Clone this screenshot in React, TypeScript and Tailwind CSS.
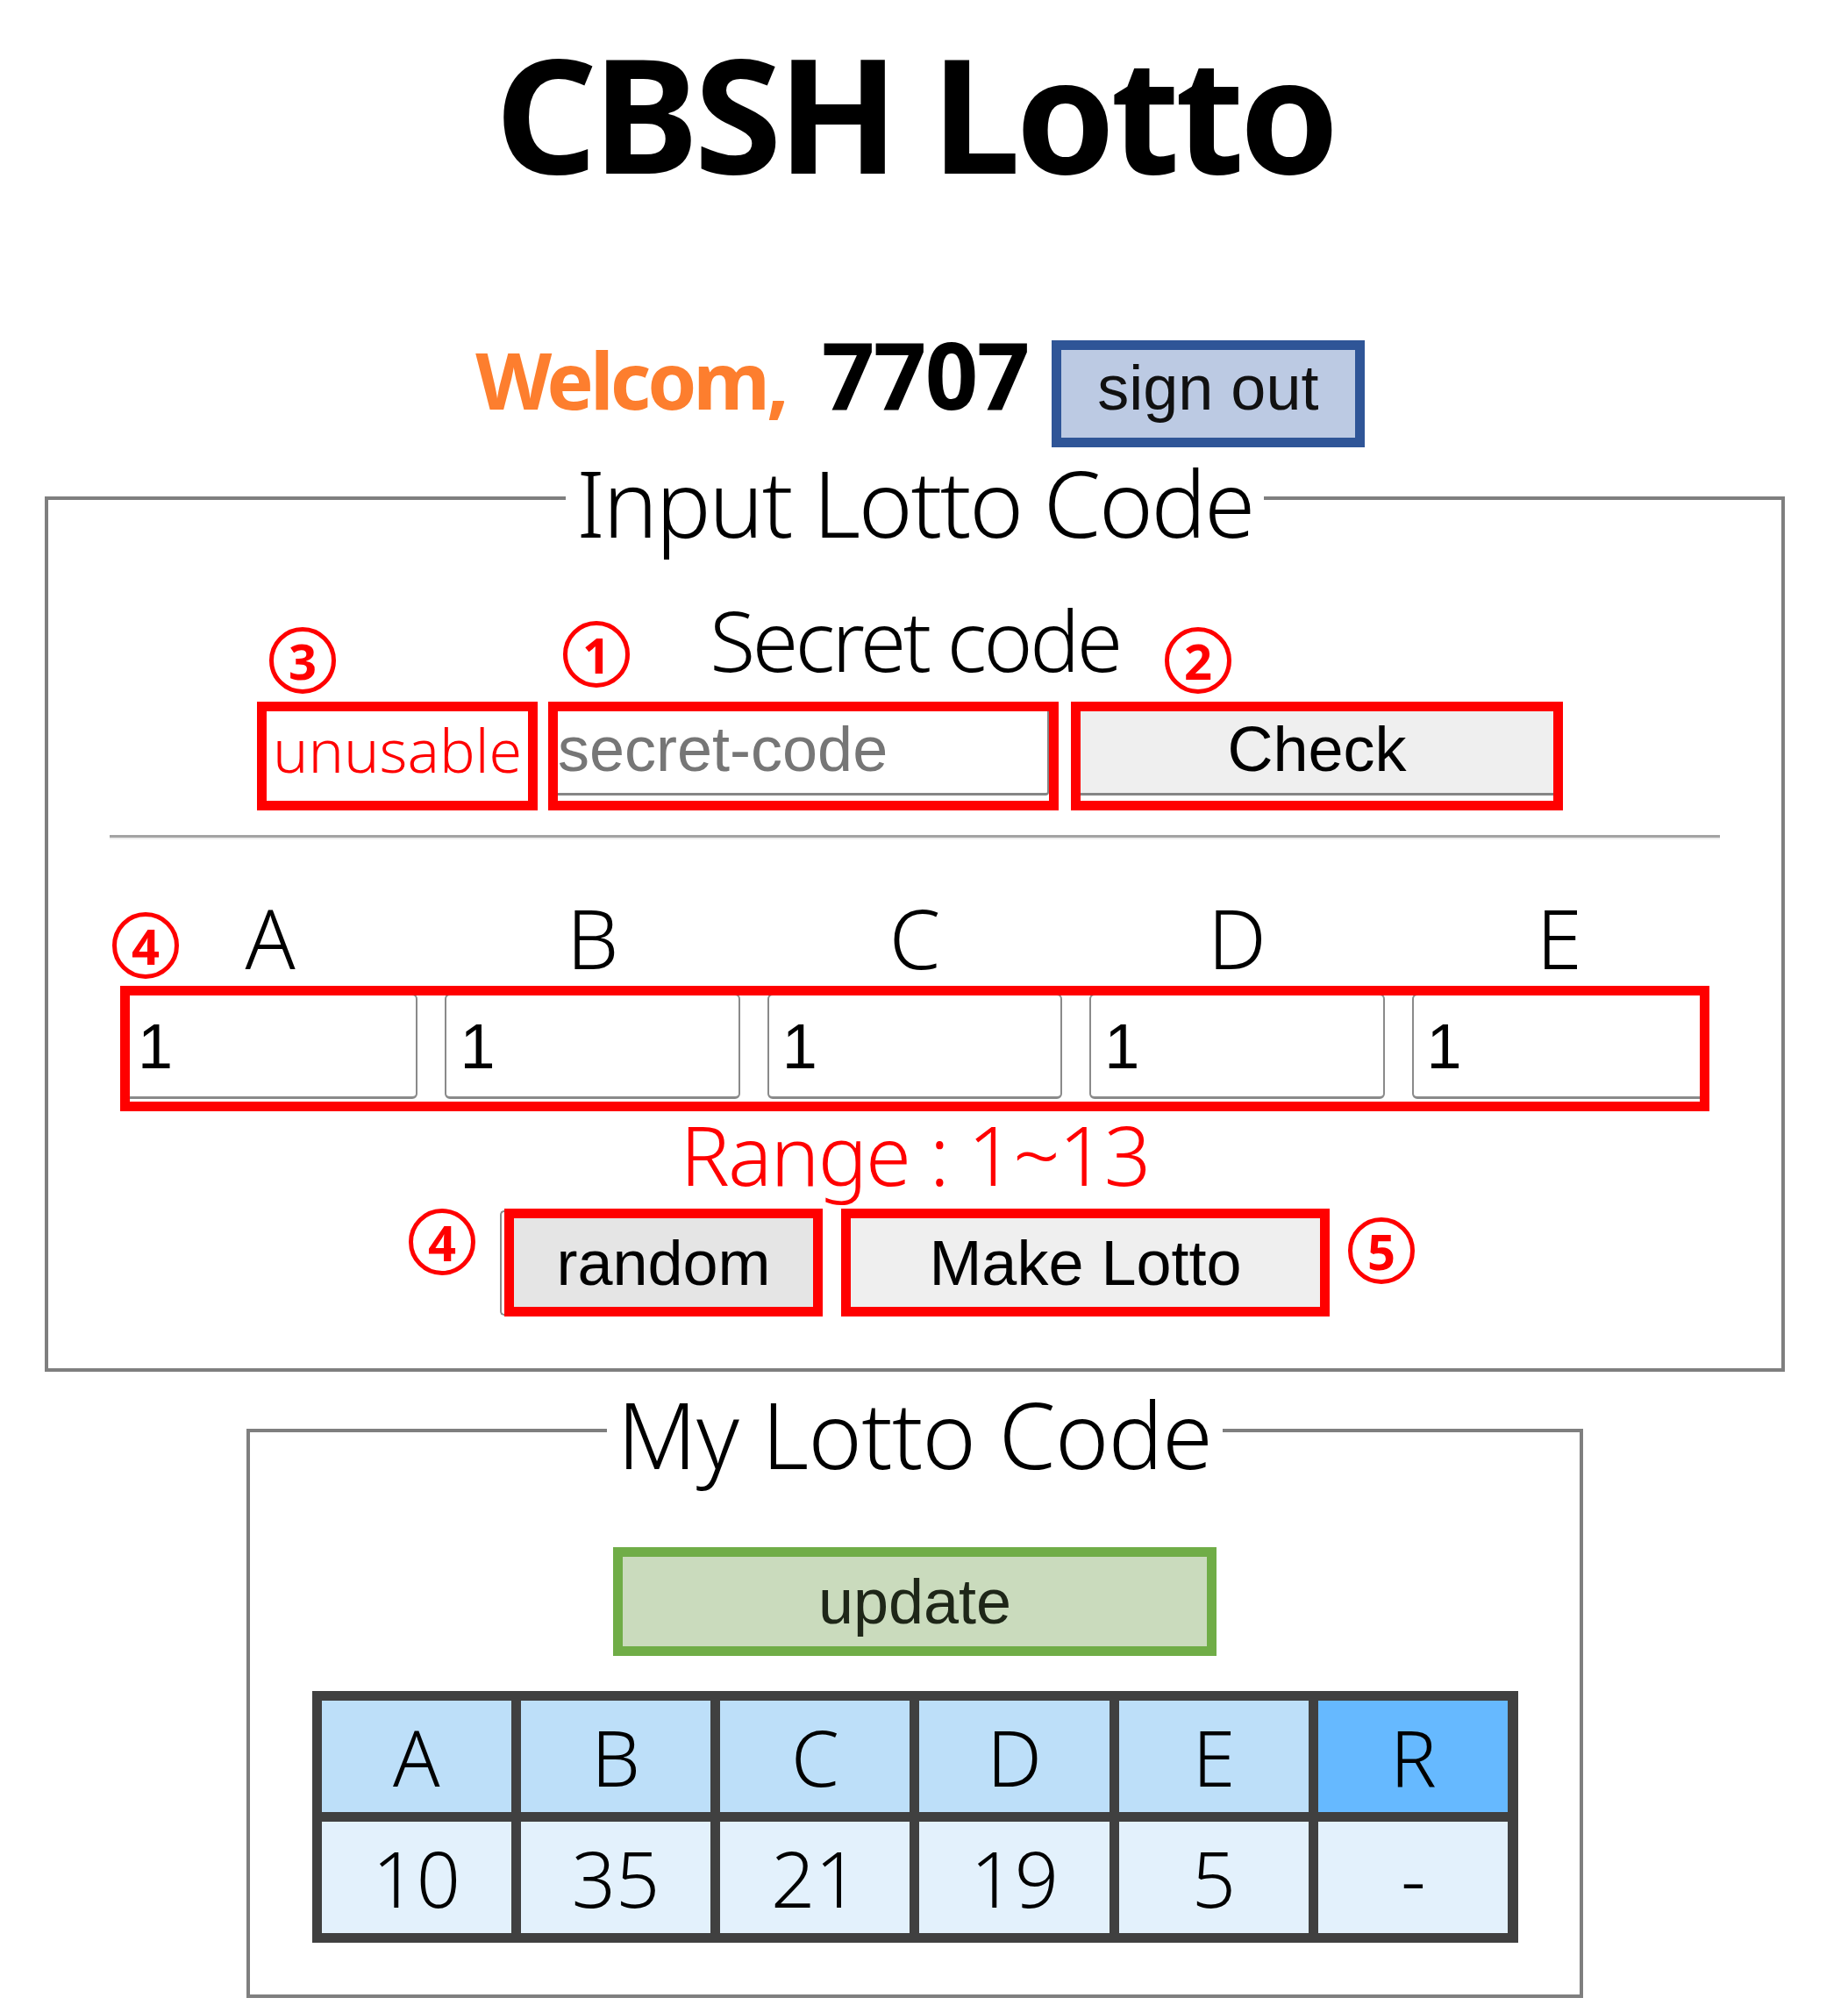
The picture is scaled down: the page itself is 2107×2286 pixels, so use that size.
import React from 'react';

const arial = "font-['Liberation_Sans',Arial,sans-serif]";

function Badge({ n, className }: { n: string; className: string }) {
  return (
    <span
      className={`absolute flex h-[76px] w-[76px] items-center justify-center rounded-full border-[5px] border-[#ff0000] text-[56px] font-bold leading-none text-[#ff0000] ${className}`}
    >
      {n}
    </span>
  );
}

const letters = ['A', 'B', 'C', 'D', 'E'];
const myCode = ['10', '35', '21', '19', '5', '-'];

export default function App() {
  return (
    <div className="min-h-[2286px] bg-white font-['Noto_Sans',sans-serif] text-black">
      <div className="flex w-[2086px] flex-col items-center">
        <h1 className="mt-[36px] text-[182px] font-bold leading-none tracking-[-0.03em]">CBSH Lotto</h1>

        {/* welcome */}
        <div className="mt-[155px] flex items-baseline pl-[12px]">
          <span className="text-[90px] font-bold leading-none tracking-[-0.045em] text-[#fd7e2e]">Welcom,</span>
          <span className="ml-[41px] text-[106px] font-bold leading-none tracking-[-0.015em]">7707</span>
          <button
            className={`ml-[26px] h-[122px] w-[357px] border-[11px] border-[#2f5597] bg-[#bccae3] pb-[14px] text-[72px] leading-none text-[#111] ${arial}`}
          >
            sign out
          </button>
        </div>

        {/* input lotto code */}
        <fieldset className="mt-[1px] w-[1984px] border-[4px] border-[#7f7f7f] px-[70px] pb-[59px]">
          <legend className="mx-auto px-[12px] pt-[9px] text-[105px] font-[350] leading-none tracking-[-0.022em]">
            Input Lotto Code
          </legend>

          <div className="mt-[57px] text-center text-[95px] font-[350] leading-none tracking-[-0.036em]">Secret code</div>

          <div className="mt-[23px] flex pl-[168px]">
            <div className="relative h-[124px] w-[320px] border-[11px] border-[#ff0000]">
              <Badge n="3" className="left-[3px] -top-[96px]" />
              <div className="pt-[10px] text-center text-[68px] font-[350] leading-none text-[#ff0000]">unusable</div>
            </div>
            <div className="relative ml-[12px] h-[124px] w-[582px] border-[11px] border-[#ff0000]">
              <Badge n="1" className="left-[6px] -top-[103px]" />
              <input
                placeholder="secret-code"
                className={`h-[96px] w-full rounded-br-[4px] border-r-2 border-b-[3px] border-[#858585] bg-white pb-[7px] text-[72px] leading-none outline-none placeholder:text-[#767676] ${arial}`}
              />
            </div>
            <div className="relative ml-[14px] h-[124px] w-[561px] border-[11px] border-[#ff0000]">
              <Badge n="2" className="left-[96px] -top-[96px]" />
              <button
                className={`h-[96px] w-full border-b-[3px] border-[#858585] bg-[#efefef] pb-[7px] text-[72px] leading-none ${arial}`}
              >
                Check
              </button>
            </div>
          </div>

          <div className="mt-[28px] border-t-[3px] border-b-2 border-t-[#a3a3a3] border-b-[#ececec]" />

          <div className="mx-auto mt-[65px] grid w-[1812px] grid-cols-5 gap-[31px] px-[3px] text-center text-[94px] font-[350] leading-none">
            {letters.map((l) => (
              <span key={l}>{l}</span>
            ))}
          </div>

          <div className="relative mx-auto mt-[8px] w-[1812px]">
            <Badge n="4" className="-left-[9px] -top-[84px]" />
            <div className="h-[143px] overflow-hidden border-[11px] border-[#ff0000]">
              <div className="-mx-[8px] -mt-[2px] grid grid-cols-5 gap-[31px]">
                {letters.map((l) => (
                  <input
                    key={l}
                    defaultValue="1"
                    className={`h-[120px] w-full min-w-0 rounded-[6px] border-2 border-b-[3px] border-[#8a8a8a] bg-white pl-[15px] text-[72px] leading-none outline-none ${arial}`}
                  />
                ))}
              </div>
            </div>
          </div>

          <div className="mt-[2px] text-center text-[94px] font-[350] leading-none tracking-[-0.02em] text-[#ff0000]">
            Range : 1~13
          </div>

          <div className="mt-[15px] flex items-center justify-center">
            <span className="h-[120px] w-[5px] rounded-l-[6px] border-y-2 border-l-2 border-[#8a8a8a]" />
            <div className="relative h-[123px] w-[363px] border-[11px] border-[#ff0000]">
              <Badge n="4" className="-left-[120px] -top-[11px]" />
              <button className={`h-full w-full bg-[#e5e5e5] text-[72px] leading-none ${arial}`}>random</button>
            </div>
            <div className="relative ml-[21px] h-[123px] w-[557px] border-[11px] border-[#ff0000]">
              <Badge n="5" className="left-[567px] -top-[1px]" />
              <button className={`h-full w-full bg-[#efefef] text-[72px] leading-none ${arial}`}>Make Lotto</button>
            </div>
          </div>
        </fieldset>

        {/* my lotto code */}
        <fieldset className="mt-[10px] w-[1524px] border-[4px] border-[#7f7f7f] pb-[59px]">
          <legend className="mx-auto px-[12px] pt-[9px] text-[104px] font-[350] leading-none tracking-[-0.006em]">
            My Lotto Code
          </legend>

          <button
            className={`mx-auto mt-[77px] block h-[124px] w-[688px] border-[11px] border-[#70ad47] bg-[#cadbbd] text-[72px] leading-none text-[#1e2618] ${arial}`}
          >
            update
          </button>

          <div className="mx-auto mt-[40px] grid w-[1375px] grid-cols-6 gap-[11px] bg-[#404040] p-[11px] text-[88px] font-[350] leading-none">
            {['A', 'B', 'C', 'D', 'E'].map((h) => (
              <div key={h} className="flex h-[127px] items-center justify-center bg-[#bddff9]">
                {h}
              </div>
            ))}
            <div className="flex h-[127px] items-center justify-center bg-[#66b9ff]">R</div>
            {myCode.map((v, i) => (
              <div key={i} className="flex h-[127px] items-center justify-center bg-[#e3f1fc]">
                {v}
              </div>
            ))}
          </div>
        </fieldset>
      </div>
    </div>
  );
}
